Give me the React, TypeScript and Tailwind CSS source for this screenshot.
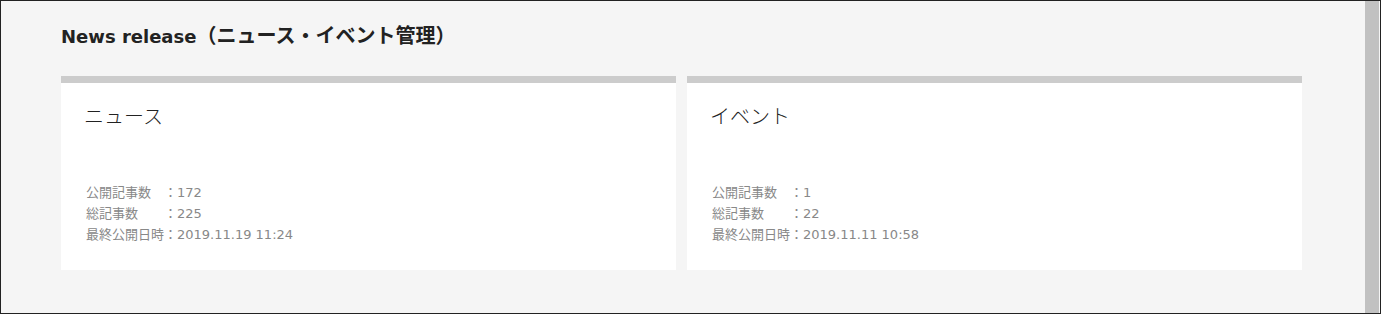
const stats = [
  {
    title: "ニュース",
    rows: [
      { label: "公開記事数　", value: "172" },
      { label: "総記事数　　", value: "225" },
      { label: "最終公開日時", value: "2019.11.19 11:24" },
    ],
  },
  {
    title: "イベント",
    rows: [
      { label: "公開記事数　", value: "1" },
      { label: "総記事数　　", value: "22" },
      { label: "最終公開日時", value: "2019.11.11 10:58" },
    ],
  },
];

const font = { fontFamily: "'DejaVu Sans', 'Noto Sans CJK JP', sans-serif" };

export default function App() {
  return (
    <div
      className="flex h-[314px] w-[1381px] overflow-hidden border border-[#222] bg-[#f5f5f5]"
      style={font}
    >
      {/* Main content */}
      <div className="flex-1 pl-[60px] pt-[21px]">
        <h1 className="mb-[25px] text-[20px] font-bold leading-[28px] text-[#222]">
          <span className="text-[18px]">News release</span>（ニュース・イベント管理）
        </h1>

        <div className="grid grid-cols-[615px_615px] gap-[11px]">
          {stats.map((card) => (
            <div
              key={card.title}
              className="border-t-[7px] border-[#cccccc] bg-white pb-[25px] pl-[23px] pt-[20px]"
            >
              <h2 className="text-[20px] font-light leading-[28px] text-[#222]">{card.title}</h2>
              <div className="mt-[51px] text-[13px] leading-[21px] text-[#888]">
                {card.rows.map((row) => (
                  <div key={row.label} className="pl-[2px]">
                    {row.label}：{row.value}
                  </div>
                ))}
              </div>
            </div>
          ))}
        </div>
      </div>

      {/* Scrollbar */}
      <div className="mr-px w-[14px] bg-[#c1c1c1]" />
    </div>
  );
}
